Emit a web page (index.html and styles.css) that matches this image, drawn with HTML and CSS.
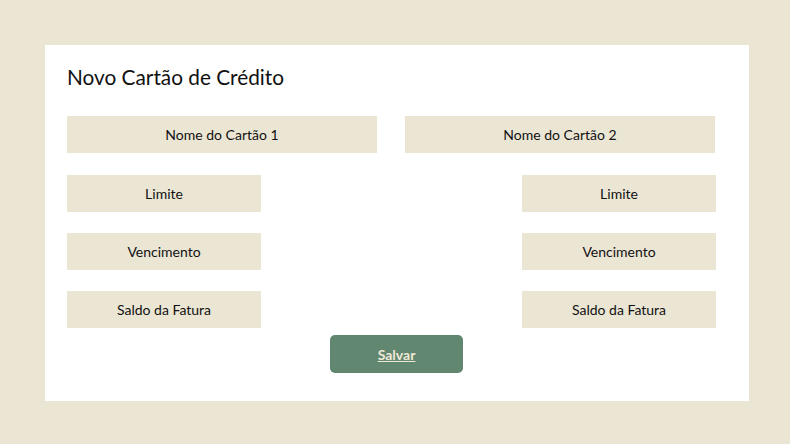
FILE: index.html
```html
<!DOCTYPE html>
<html lang="pt-BR">
<head>
<meta charset="utf-8">
<title>Novo Cartão de Crédito</title>
<link rel="stylesheet" href="styles.css">
</head>
<body>
<main class="card">
  <h1 class="title">Novo Cartão de Crédito</h1>
  <form class="form">
    <div class="columns">
      <div class="col col-left">
        <input class="field field-wide" type="text" placeholder="Nome do Cartão 1">
        <input class="field" type="text" placeholder="Limite">
        <input class="field" type="text" placeholder="Vencimento">
        <input class="field" type="text" placeholder="Saldo da Fatura">
      </div>
      <div class="col col-right">
        <input class="field field-wide" type="text" placeholder="Nome do Cartão 2">
        <input class="field" type="text" placeholder="Limite">
        <input class="field" type="text" placeholder="Vencimento">
        <input class="field" type="text" placeholder="Saldo da Fatura">
      </div>
    </div>
    <div class="actions">
      <button class="save" type="button">Salvar</button>
    </div>
  </form>
</main>
</body>
</html>
```

FILE: styles.css
```css
* { box-sizing: border-box; }
html, body { margin: 0; }
body {
  background: #ebe5d4;
  padding: 45px 41px 43px 45px;
  font-family: "Lato", "Open Sans", sans-serif;
  color: #111;
}
.card {
  background: #ffffff;
  width: 704px;
  height: 356px;
  padding: 20px 23px 28px 22px;
}
.title {
  margin: 0;
  font-size: 20.8px;
  font-weight: 400;
  line-height: 24px;
  color: #111;
}
.form { margin-top: 27px; }
.columns {
  display: grid;
  grid-template-columns: 310px 310px;
  column-gap: 28px;
}
.col {
  display: flex;
  flex-direction: column;
  gap: 21px;
}
.col-left { align-items: flex-start; }
.col-right { align-items: flex-end; }
.field {
  display: block;
  width: 194px;
  height: 37px;
  border: none;
  outline: none;
  background: #ebe5d4;
  font-family: inherit;
  font-size: 14px;
  color: #111;
  text-align: center;
  padding: 0;
}
.col-right .field { margin-right: -1px; }
.col-right .field-wide { margin-right: 0; }
.field::placeholder { color: #111; opacity: 1; }
.field-wide { width: 310px; margin-bottom: 1px; }
.actions {
  display: flex;
  justify-content: center;
  margin-top: 7px;
}
.save {
  width: 133px;
  height: 38px;
  border: none;
  border-radius: 5px;
  background: #618770;
  color: #efe8d6;
  font-family: inherit;
  font-size: 14px;
  font-weight: 700;
  text-decoration: underline;
  cursor: pointer;
}
```
